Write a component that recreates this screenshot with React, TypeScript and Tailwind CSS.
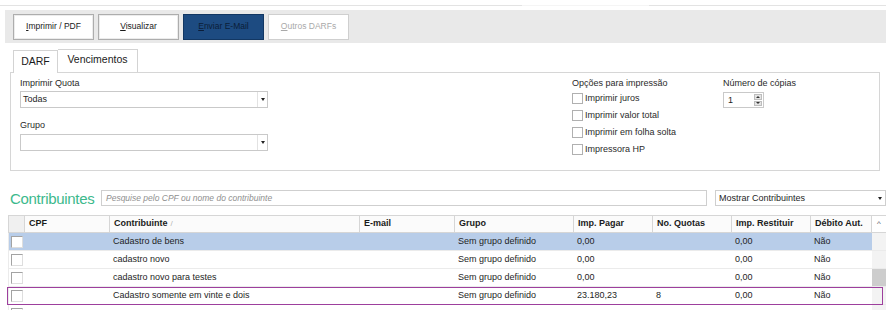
import React from "react";

const cols = [
  { key: "cpf", label: "CPF", w: "w-[85px]" },
  { key: "nome", label: "Contribuinte", w: "w-[250px]" },
  { key: "email", label: "E-mail", w: "w-[95px]" },
  { key: "grupo", label: "Grupo", w: "w-[119px]" },
  { key: "pagar", label: "Imp. Pagar", w: "w-[79px]" },
  { key: "quotas", label: "No. Quotas", w: "w-[79px]" },
  { key: "rest", label: "Imp. Restituir", w: "w-[79px]" },
  { key: "deb", label: "Débito Aut.", w: "w-[61px]" },
];

const rows: Record<string, string>[] = [
  { cpf: "", nome: "Cadastro de bens", email: "", grupo: "Sem grupo definido", pagar: "0,00", quotas: "", rest: "0,00", deb: "Não" },
  { cpf: "", nome: "cadastro novo", email: "", grupo: "Sem grupo definido", pagar: "0,00", quotas: "", rest: "0,00", deb: "Não" },
  { cpf: "", nome: "cadastro novo para testes", email: "", grupo: "Sem grupo definido", pagar: "0,00", quotas: "", rest: "0,00", deb: "Não" },
  { cpf: "", nome: "Cadastro somente em vinte e dois", email: "", grupo: "Sem grupo definido", pagar: "23.180,23", quotas: "8", rest: "0,00", deb: "Não" },
  { cpf: "", nome: "", email: "", grupo: "", pagar: "", quotas: "", rest: "", deb: "" },
];

function Arrow() {
  return <span className="block w-0 h-0 border-l-[2.5px] border-r-[2.5px] border-t-[3px] border-l-transparent border-r-transparent border-t-[#222]" />;
}

function Select({ value, className }: { value: string; className: string }) {
  return (
    <div className={`flex h-[17px] border border-[#c9c9c9] bg-white ${className}`}>
      <span className="flex-1 pl-[2px] leading-[15px] text-[#1e1e1e]">{value}</span>
      <span className="w-[10px] border-l border-[#e2e2e2] flex items-center justify-center">
        <Arrow />
      </span>
    </div>
  );
}

function Check() {
  return <span className="block w-[11px] h-[11px] border border-[#b0b0b0] bg-white" />;
}

function RowCheck() {
  return <span className="block w-[12px] h-[12px] border border-[#a3a3a3] border-r-[#dedede] border-b-[#dedede] bg-white" />;
}

function ToolButton({ children, variant }: { children: React.ReactNode; variant?: "active" | "disabled" }) {
  const style =
    variant === "active"
      ? "bg-[#1d4b81] border-[#123763] text-[#0b1d38]"
      : variant === "disabled"
      ? "bg-white border-[#cfcfcf] text-[#a9a9a9]"
      : "bg-white border-[#adadad] text-[#1a1a1a] shadow-[inset_0_0_0_1px_#ececec]";
  return (
    <button className={`w-[81px] h-[26px] border text-[8.5px] ${style}`}>{children}</button>
  );
}

export default function App() {
  return (
    <div className="w-[886px] h-[310px] overflow-hidden bg-white font-['Liberation_Sans',Arial,sans-serif] text-[9px] text-[#2a2a2a]">
      <div className="mt-[5px] h-px flex">
        <div className="w-[522px] bg-[#e3e3e3]" />
        <div className="w-[127px] bg-[#f5f5f5]" />
        <div className="flex-1 bg-[#e3e3e3]" />
      </div>

      <div className="mt-[4px] ml-[5px] h-[33px] bg-[#e9e9e9] flex items-center pl-[8px] gap-[4px]">
        <ToolButton><u>I</u>mprimir / PDF</ToolButton>
        <ToolButton><u>V</u>isualizar</ToolButton>
        <ToolButton variant="active"><u>E</u>nviar E-Mail</ToolButton>
        <ToolButton variant="disabled"><u>O</u>utros DARFs</ToolButton>
      </div>

      <div className="mt-[6px] ml-[13px] h-[23px] flex items-end text-[10.5px] text-[#1a1a1a]">
        <div className="relative z-10 -mb-px w-[45px] h-[23px] border-l border-t border-r border-[#d3d3d3] bg-white flex items-end justify-center pb-[3px]">DARF</div>
        <div className="w-[80px] h-[23px] border-t border-r border-[#d3d3d3] bg-white flex items-center justify-center pb-[2px]">Vencimentos</div>
      </div>

      <div className="ml-[10px] w-[870px] h-[99px] border border-[#d6d6d6] flex">
        <div className="w-[257px] pl-[9px] pt-[5px] flex flex-col">
          <span className="leading-[11px]">Imprimir Quota</span>
          <Select value="Todas" className="mt-[2px]" />
          <span className="mt-[12px] leading-[11px]">Grupo</span>
          <Select value="" className="mt-[3px]" />
        </div>

        <div className="ml-[304px] w-[151px] pt-[5px] flex flex-col">
          <span className="leading-[11px]">Opções para impressão</span>
          <div className="mt-[1px] flex flex-col">
            {["Imprimir juros", "Imprimir valor total", "Imprimir em folha solta", "Impressora HP"].map((t) => (
              <div key={t} className="h-[17px] flex items-center gap-[2px]">
                <Check />
                <span>{t}</span>
              </div>
            ))}
          </div>
        </div>

        <div className="pt-[5px] flex flex-col">
          <span className="leading-[11px]">Número de cópias</span>
          <div className="mt-[3px] w-[41px] h-[16px] border border-[#c9c9c9] bg-white flex">
            <span className="flex-1 pl-[4px] leading-[14px] text-[#1e1e1e]">1</span>
            <div className="w-[8px] my-[1px] mr-[1px] flex flex-col gap-px">
              <span className="flex-1 bg-[#e4e4e4] border border-[#bdbdbd] flex items-center justify-center">
                <span className="block w-0 h-0 border-l-[2px] border-r-[2px] border-b-[2px] border-l-transparent border-r-transparent border-b-[#333]" />
              </span>
              <span className="flex-1 bg-[#e4e4e4] border border-[#bdbdbd] flex items-center justify-center">
                <span className="block w-0 h-0 border-l-[2px] border-r-[2px] border-t-[2px] border-l-transparent border-r-transparent border-t-[#333]" />
              </span>
            </div>
          </div>
        </div>
      </div>

      <div className="mt-[19px] h-[16px] flex items-center">
        <span className="w-[101px] pl-[10px] text-[15px] tracking-[-0.3px] leading-none text-[#3cb98c] whitespace-nowrap">Contribuintes</span>
        <div className="w-[606px] h-[16px] border border-[#cfcfcf] bg-white pl-[4px] leading-[14px] italic text-[8.5px] text-[#8f8f8f]">
          Pesquise pelo CPF ou nome do contribuinte
        </div>
        <div className="ml-[8px] flex-1 h-[16px] border border-[#cfcfcf] bg-white flex">
          <span className="flex-1 pl-[3px] leading-[14px] text-[#1e1e1e]">Mostrar Contribuintes</span>
          <span className="w-[10px] flex items-center justify-center">
            <Arrow />
          </span>
        </div>
      </div>

      <div className="relative mt-[9px] ml-[8px] w-[878px] flex flex-col">
        <div className="h-[18px] flex border-t border-b border-l border-[#d6d6d6] bg-[#fbfbfb] font-bold text-[#1a1a1a]">
          <div className="w-[16px] border-r border-[#d6d6d6] bg-[#f0f0f0]" />
          {cols.map((c) => (
            <div key={c.key} className={`${c.w} border-r border-[#d6d6d6] pl-[4px] flex items-center whitespace-nowrap`}>
              {c.label}
              {c.key === "nome" && <span className="ml-[3px] font-normal text-[#b5b5b5] text-[8px]">/</span>}
            </div>
          ))}
          <div className="flex-1 bg-white flex items-center justify-center font-normal text-[#555] text-[8px]">^</div>
        </div>

        {rows.map((r, i) => (
          <div key={i} className={`h-[18px] shrink-0 flex border-b border-l border-[#ebebeb] ${i === 0 ? "bg-[#b8cde9]" : "bg-white"}`}>
            <div className="w-[16px] flex items-center pl-[2px]">
              <RowCheck />
            </div>
            {cols.map((c) => (
              <div key={c.key} className={`${c.w} pl-[3px] flex items-center whitespace-nowrap text-[#1e1e1e]`}>
                {r[c.key]}
              </div>
            ))}
            <div className={`flex-1 ${i === 2 ? "bg-[#cdcdcd]" : "bg-[#f3f3f3]"}`} />
          </div>
        ))}

        <div className="absolute left-[-1px] top-[72px] w-[876px] h-[18px] border-[1.5px] border-[#9d3f9d] pointer-events-none" />
      </div>
    </div>
  );
}
